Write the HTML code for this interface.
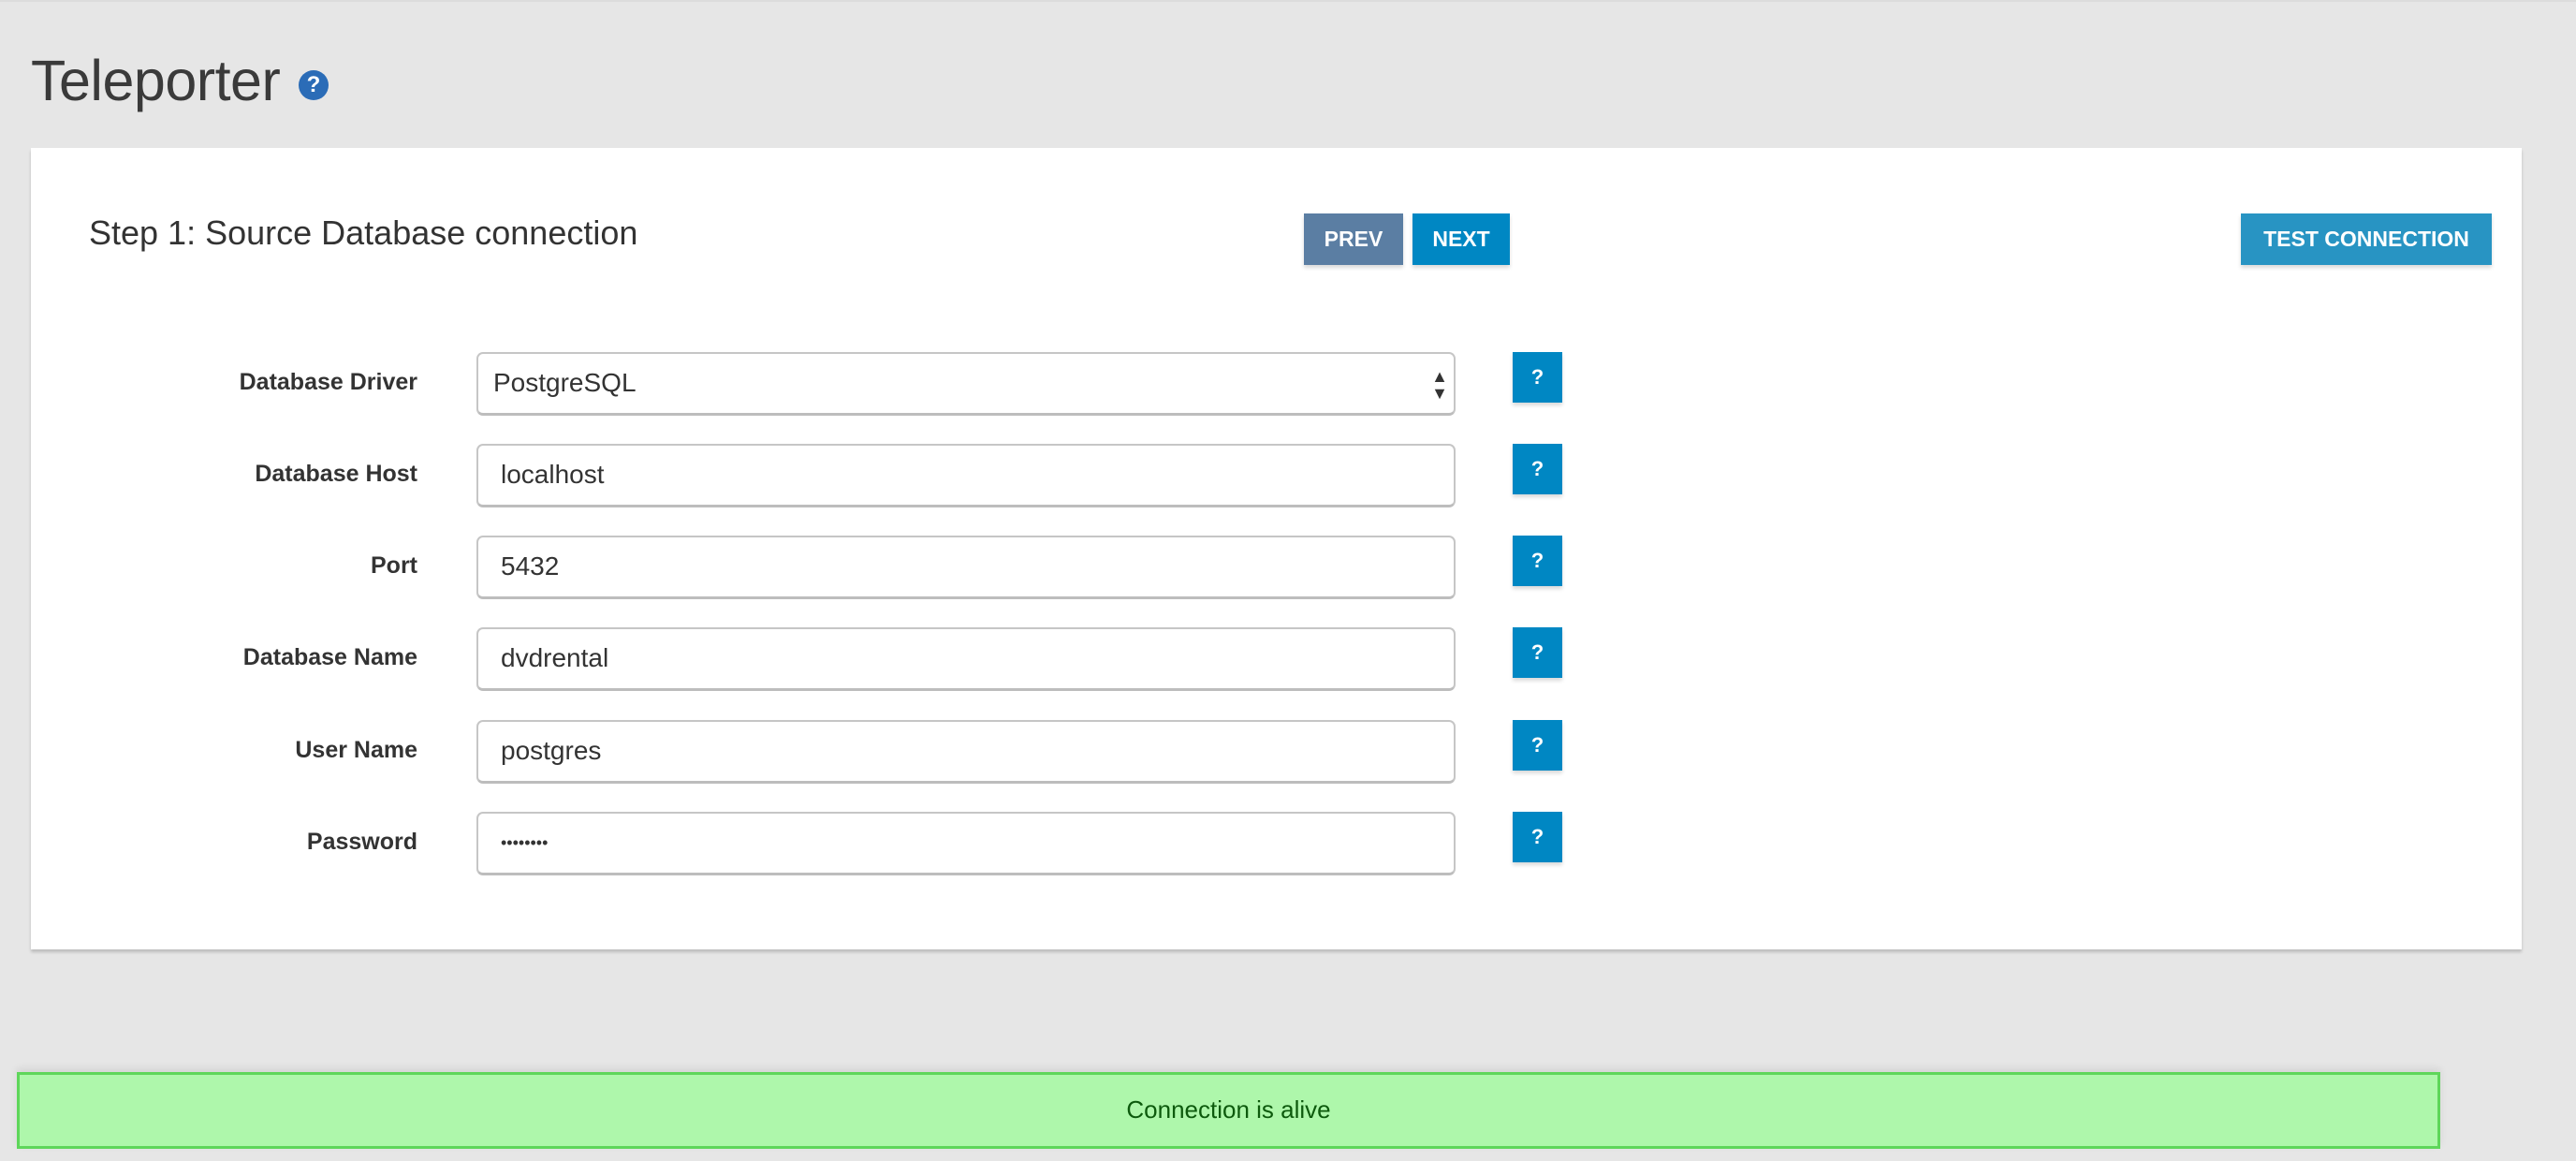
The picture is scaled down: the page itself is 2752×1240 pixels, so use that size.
<!DOCTYPE html>
<html><head><meta charset="utf-8"><style>
html,body{margin:0;padding:0;}
body{width:2752px;height:1240px;background:#e6e6e6;position:relative;overflow:hidden;font-family:"Liberation Sans",Arial,sans-serif;color:#333;border-top:2px solid #dcdcdc;box-sizing:border-box;}
h1{position:absolute;left:33px;top:49px;margin:0;font-weight:normal;font-size:61px;line-height:70px;color:#3a3a3a;letter-spacing:-0.5px;}
.qc{position:absolute;left:319px;top:73px;width:32px;height:32px;border-radius:50%;background:#2b6cb7;color:#fff;font-weight:bold;font-size:24px;line-height:32px;text-align:center;}
.card{position:absolute;left:33px;top:156px;width:2661px;height:856px;background:#fff;box-shadow:0 3px 3px rgba(0,0,0,.18);}
.step{position:absolute;left:95px;top:224px;font-size:36px;line-height:46px;color:#333;}
.btn{position:absolute;top:226px;height:55px;color:#fff;font-weight:bold;font-size:23px;line-height:55px;text-align:center;box-shadow:0 3px 4px rgba(0,0,0,.15);}
.lbl{position:absolute;right:2306px;font-weight:bold;font-size:25px;line-height:68px;color:#333;text-align:right;white-space:nowrap;}
.inp{position:absolute;left:509px;width:1046px;height:68px;box-sizing:border-box;border:2px solid #c6c6c6;border-bottom:3px solid #bdbdbd;border-radius:7px;background:#fff;font-size:28px;line-height:62px;padding-left:24px;color:#333;}
.hb{position:absolute;left:1616px;width:53px;height:54px;background:#0087c3;color:#fff;font-weight:bold;font-size:22px;line-height:54px;text-align:center;box-shadow:0 3px 4px rgba(0,0,0,.15);}
.alert{position:absolute;left:18px;top:1143px;width:2589px;height:82px;box-sizing:border-box;background:#aef7ab;border:3px solid #5ed65a;text-align:center;font-size:26px;line-height:74px;color:#0d5a0d;box-shadow:0 -4px 8px rgba(0,0,0,.08);}
</style></head><body>
<h1>Teleporter</h1>
<div class="qc">?</div>
<div class="card"></div>
<div class="step">Step 1: Source Database connection</div>
<div class="btn" style="left:1393px;width:106px;background:#5b7ea3;">PREV</div>
<div class="btn" style="left:1509px;width:104px;background:#0087c3;">NEXT</div>
<div class="btn" style="left:2394px;width:268px;background:#2894c3;">TEST CONNECTION</div>

<div class="lbl" style="top:372px;">Database Driver</div>
<div class="inp" style="top:374px;padding-left:16px;">PostgreSQL<span style="position:absolute;right:6px;top:0;font-size:18px;line-height:18px;padding-top:15px;color:#333;">▲<br>▼</span></div>
<div class="hb" style="top:374px;">?</div>

<div class="lbl" style="top:470px;">Database Host</div>
<div class="inp" style="top:472px;">localhost</div>
<div class="hb" style="top:472px;">?</div>

<div class="lbl" style="top:568px;">Port</div>
<div class="inp" style="top:570px;">5432</div>
<div class="hb" style="top:570px;">?</div>

<div class="lbl" style="top:666px;">Database Name</div>
<div class="inp" style="top:668px;">dvdrental</div>
<div class="hb" style="top:668px;">?</div>

<div class="lbl" style="top:765px;">User Name</div>
<div class="inp" style="top:767px;">postgres</div>
<div class="hb" style="top:767px;">?</div>

<div class="lbl" style="top:863px;">Password</div>
<div class="inp" style="top:865px;font-size:18px;letter-spacing:0px;">••••••••</div>
<div class="hb" style="top:865px;">?</div>

<div class="alert">Connection is alive</div>
</body></html>
